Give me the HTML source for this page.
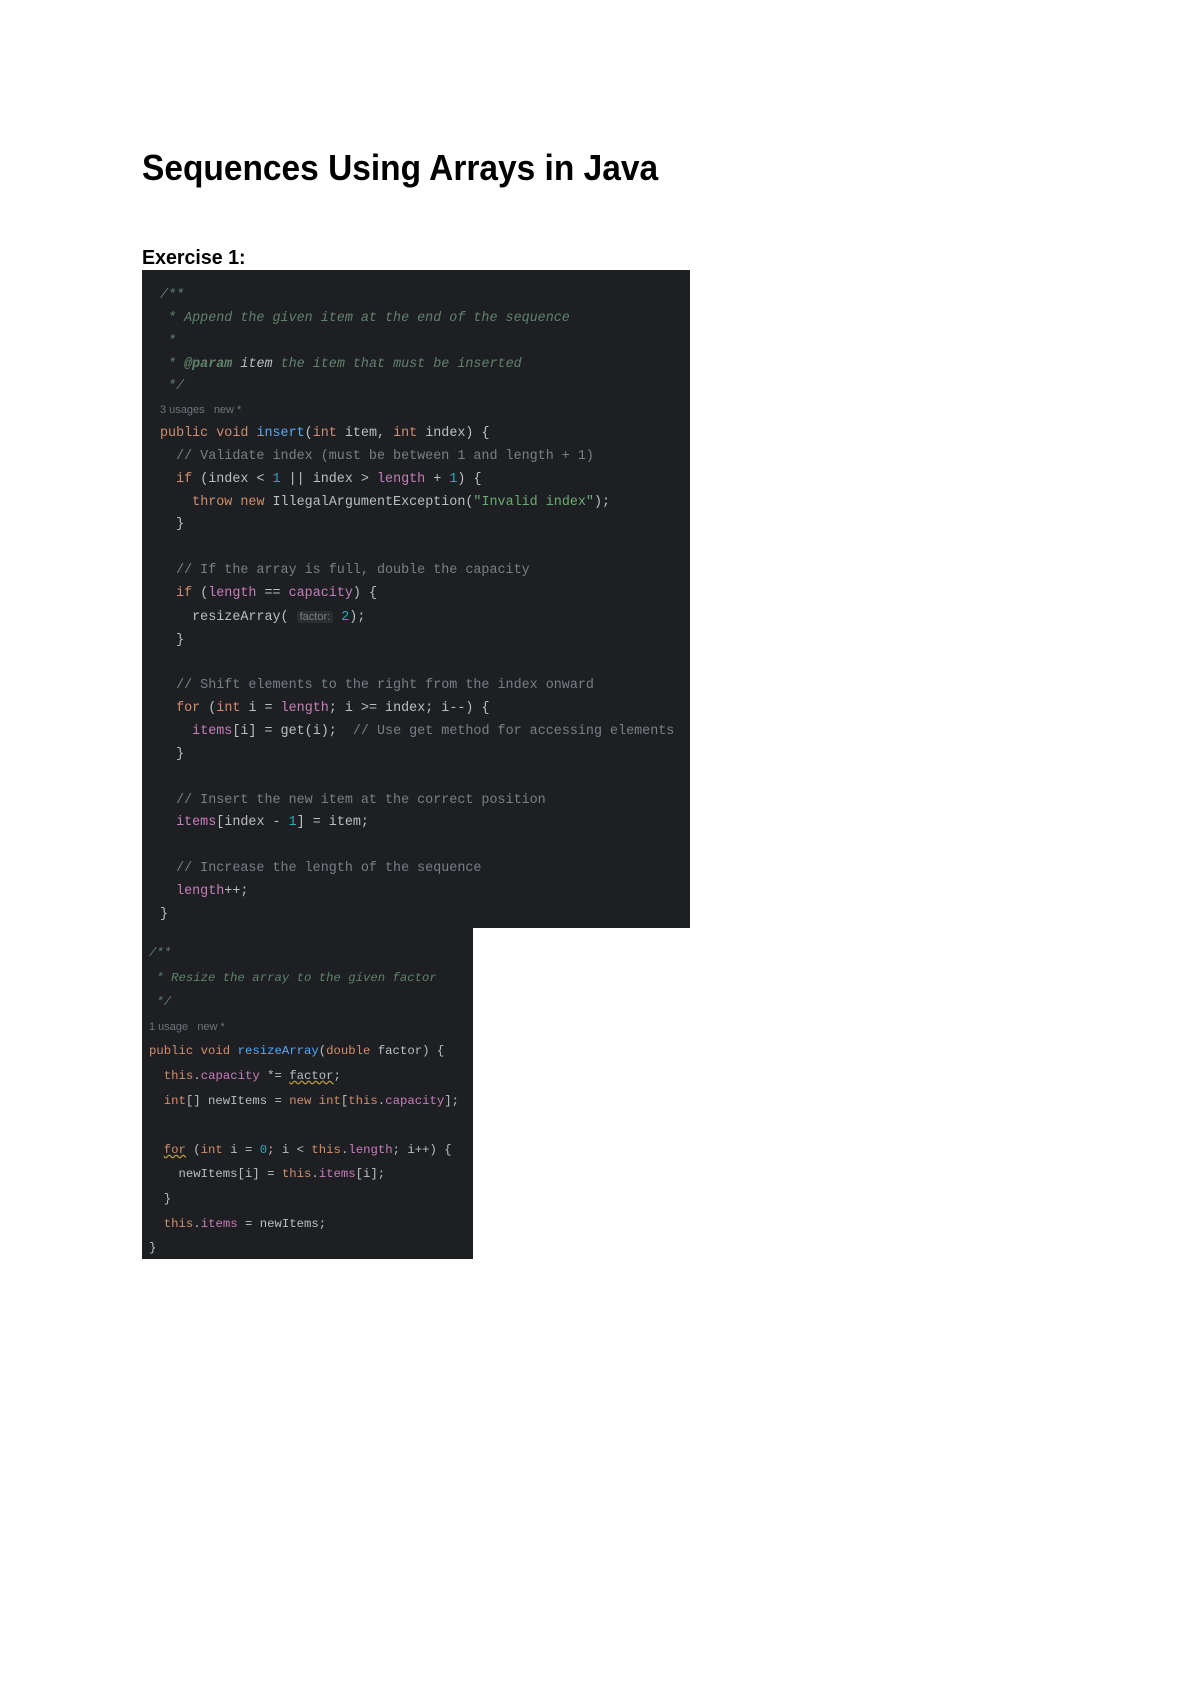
<!DOCTYPE html>
<html><head><meta charset="utf-8"><style>
body{margin:0;background:#fff;width:1200px;height:1698px;position:relative;overflow:hidden;font-family:"Liberation Sans",sans-serif}
.t{position:absolute;left:142px;top:147px;font-size:36px;font-weight:bold;color:#000;transform-origin:0 0;transform:scaleX(0.93);white-space:nowrap}
.e{position:absolute;left:142px;top:247px;font-size:20px;font-weight:bold;color:#000;transform-origin:0 0;transform:scaleX(0.98);white-space:nowrap}
.b{position:absolute;background:#1e1f22}
pre{position:absolute;margin:0;font-family:"Liberation Mono","DejaVu Sans Mono",monospace;color:#bcbec4;white-space:pre}
.c{color:#7a7e85}.d{color:#5f826b;font-style:italic}.k{color:#cf8e6d}.f{color:#56a8f5}.p{color:#c77dbb}.n{color:#2aacb8}.s{color:#6aab73}
.u{color:#6f737a;font-family:"Liberation Sans",sans-serif;font-size:11px}
.h{background:#2b2d30;color:#7a7e85;font-family:"Liberation Sans",sans-serif;font-size:11px;border-radius:3px;padding:0 3px}
.w{text-decoration:underline wavy #b89b3a}
</style></head><body>
<div class="t">Sequences Using Arrays in Java</div>
<div class="e">Exercise 1:</div>
<div class="b" style="left:142px;top:270px;width:548px;height:658px"></div>
<div class="b" style="left:142px;top:928px;width:331px;height:331px"></div>
<pre style="left:160px;top:285px;font-size:13.4px;line-height:22.85px"><span class="d">/**
 * Append the given item at the end of the sequence
 *
 * <b>@param</b> <span style="color:#bcbec4">item</span> the item that must be inserted
 */</span>
<span class="u">3 usages   new *</span>
<span class="k">public void </span><span class="f">insert</span>(<span class="k">int </span>item, <span class="k">int </span>index) {
  <span class="c">// Validate index (must be between 1 and length + 1)</span>
  <span class="k">if </span>(index &lt; <span class="n">1</span> || index &gt; <span class="p">length</span> + <span class="n">1</span>) {
    <span class="k">throw new </span>IllegalArgumentException(<span class="s">"Invalid index"</span>);
  }

  <span class="c">// If the array is full, double the capacity</span>
  <span class="k">if </span>(<span class="p">length</span> == <span class="p">capacity</span>) {
    resizeArray( <span class="h">factor:</span> <span class="n">2</span>);
  }

  <span class="c">// Shift elements to the right from the index onward</span>
  <span class="k">for </span>(<span class="k">int </span>i = <span class="p">length</span>; i &gt;= index; i--) {
    <span class="p">items</span>[i] = get(i);  <span class="c">// Use get method for accessing elements</span>
  }

  <span class="c">// Insert the new item at the correct position</span>
  <span class="p">items</span>[index - <span class="n">1</span>] = item;

  <span class="c">// Increase the length of the sequence</span>
  <span class="p">length</span>++;
}</pre>
<pre style="left:149px;top:941px;font-size:12.3px;line-height:24.6px"><span class="d">/**
 * Resize the array to the given factor
 */</span>
<span class="u">1 usage   new *</span>
<span class="k">public void </span><span class="f">resizeArray</span>(<span class="k">double </span>factor) {
  <span class="k">this</span>.<span class="p">capacity</span> *= <span class="w">factor</span>;
  <span class="k">int</span>[] newItems = <span class="k">new int</span>[<span class="k">this</span>.<span class="p">capacity</span>];

  <span class="k w">for</span> (<span class="k">int </span>i = <span class="n">0</span>; i &lt; <span class="k">this</span>.<span class="p">length</span>; i++) {
    newItems[i] = <span class="k">this</span>.<span class="p">items</span>[i];
  }
  <span class="k">this</span>.<span class="p">items</span> = newItems;
}</pre>
</body></html>
